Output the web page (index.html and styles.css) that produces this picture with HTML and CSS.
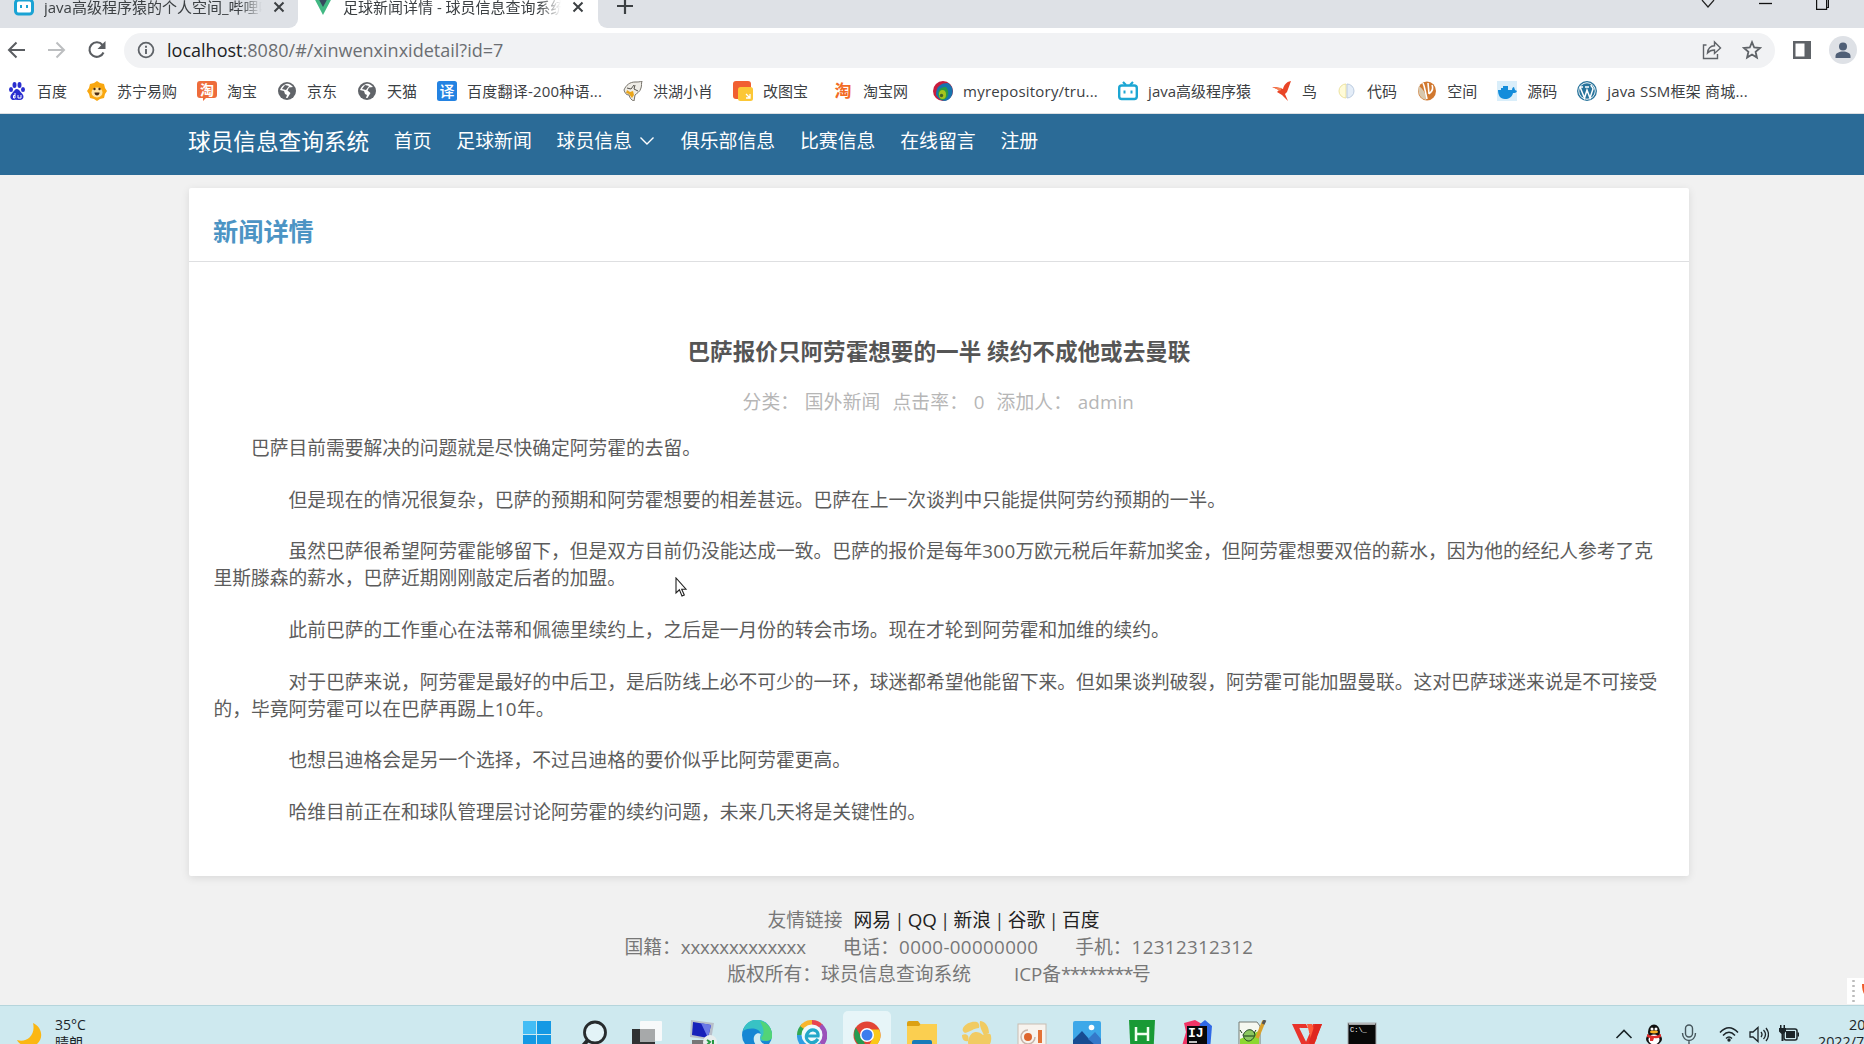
FILE: index.html
```html
<!DOCTYPE html>
<html lang="zh-CN">
<head>
    <meta charset="UTF-8">
    <title>足球新闻详情 - 球员信息查询系统</title>
    <link rel="stylesheet" href="styles.css">
</head>
<body>

    <!-- Tabs -->
    <div class="tabs">
        <div class="tab">
            <svg class="tab-icon" width="20" height="20" viewBox="0 0 20 20"><rect x="1.5" y="4" width="17" height="14" rx="3" fill="#fff" stroke="#1aa3d4" stroke-width="3"/><path d="M7 9v3M13 9v3" stroke="#1aa3d4" stroke-width="2"/></svg>
            <span class="tab-title">java高级程序猿的个人空间_哔哩哔哩</span>
            <svg class="close" width="12" height="12" viewBox="0 0 12 12"><path d="M1.5 1.5l9 9m0-9l-9 9" stroke="#3c4043" stroke-width="2"/></svg>
        </div>
        <div class="tab active">
            <svg class="tab-icon" width="20" height="20" viewBox="0 0 20 20"><path d="M0 0h20L10 19z" fill="#41b883"/><path d="M4 0h12l-6 11z" fill="#35495e"/></svg>
            <span class="tab-title">足球新闻详情 - 球员信息查询系统</span>
            <svg class="close" width="12" height="12" viewBox="0 0 12 12"><path d="M1.5 1.5l9 9m0-9l-9 9" stroke="#3c4043" stroke-width="2"/></svg>
        </div>
        <div class="tab-rest">
            <svg width="16" height="16" viewBox="0 0 16 16"><path d="M8 0v16M0 8h16" stroke="#3c4043" stroke-width="2.2"/></svg>
            <div class="window-buttons">
                <svg width="14" height="10" viewBox="0 0 14 10"><path d="M1 0l6 7 6-7" fill="none" stroke="#222" stroke-width="1.2"/></svg>
                <svg width="13" height="10" viewBox="0 0 13 10"><path d="M0 3.5h13" stroke="#111" stroke-width="1.3"/></svg>
                <svg width="13" height="10" viewBox="0 0 13 10"><path d="M.6 0v9.3h10V0M12.4 0v7.5h-2" fill="none" stroke="#111" stroke-width="1.2"/></svg>
            </div>
        </div>
    </div>

    <!-- Address bar -->
    <div class="toolbar">
        <svg width="20" height="20" viewBox="0 0 20 20"><path d="M18 10H2.500M9.500 2.500L2 10l7.500 7.500" fill="none" stroke="#5a5d61" stroke-width="2"/></svg>
        <svg width="20" height="20" viewBox="0 0 20 20"><path d="M1 10h15.500M9.500 2.500L17 10l-7.500 7.500" fill="none" stroke="#bcbec0" stroke-width="2"/></svg>
        <svg width="20" height="20" viewBox="0 0 20 20"><path d="M16.500 12.500A7.300 7.300 0 1 1 15.500 5" fill="none" stroke="#5a5d61" stroke-width="2.100"/><path d="M18.500 1v8h-8z" fill="#5a5d61"/></svg>
        <div class="address">
            <svg width="18" height="18" viewBox="0 0 18 18"><circle cx="9" cy="9" r="7.400" fill="none" stroke="#5f6368" stroke-width="1.800"/><path d="M9 8v5M9 4.700v2" stroke="#5f6368" stroke-width="1.900"/></svg>
            <span class="url"><b>localhost</b>:8080/#/xinwenxinxidetail?id=7</span>
            <svg class="share" width="20" height="20" viewBox="0 0 20 20"><path d="M4.500 5H1.500v13.500h14V14M5.500 13c.5-5 3-7 7-7.200V2l6 6-6 5.500V10c-3 0-5 .8-7 3z" fill="none" stroke="#5f6368" stroke-width="1.400"/></svg>
            <svg width="20" height="20" viewBox="0 0 20 20"><path d="M10 2.200l2.200 5.300 5.800.5-4.400 3.800 1.300 5.700-4.900-3-4.900 3 1.300-5.700L2 8l5.800-.5z" fill="none" stroke="#5f6368" stroke-width="1.800"/></svg>
        </div>
        <svg class="panel" width="18" height="18" viewBox="0 0 18 18"><path fill-rule="evenodd" d="M0 0h18v18H0zM2.500 2.500v13h9v-13z" fill="#5f6368"/></svg>
        <svg width="28" height="28" viewBox="0 0 28 28"><circle cx="14" cy="14" r="14" fill="#dee1e6"/><circle cx="14" cy="10.500" r="4" fill="#4f5f76"/><path d="M6.500 22v-2c0-6 15-6 15 0v2z" fill="#4f5f76"/></svg>
    </div>

    <!-- Bookmarks -->
    <div class="bookmarks">
        <a><svg width="20" height="20" viewBox="0 0 20 20"><g fill="#2b2fd0"><ellipse cx="4" cy="8.500" rx="2" ry="2.600"/><ellipse cx="7.500" cy="4" rx="2" ry="2.900"/><ellipse cx="12.500" cy="4" rx="2" ry="2.900"/><ellipse cx="16" cy="8.500" rx="2" ry="2.600"/><path d="M10 8c2 0 3 2.500 5 4.500 3 3 1 6.500-2 6.500-2 0-4-.6-6 0-3 .5-5-3-2.500-6S8 8 10 8z"/></g><path d="M8 12v5H6.500v-2.500H8M11 14v3h3v-3" fill="none" stroke="#fff"/></svg><span>百度</span></a>
        <a><svg width="20" height="20" viewBox="0 0 20 20"><path d="M10 0l3 2 4 1 1 4 2 3-2 3-1 4-4 1-3 2-3-2-4-1-1-4-2-3 2-3 1-4 4-1z" fill="#f9a70f"/><ellipse cx="10" cy="11.500" rx="5.500" ry="5" fill="#ffe5a6"/><circle cx="7.500" cy="8" r="1.200" fill="#4a2c14"/><circle cx="12.500" cy="8" r="1.200" fill="#4a2c14"/><path d="M7.500 11.500h5c0 4-5 4-5 0z" fill="#4a2c14"/></svg><span>苏宁易购</span></a>
        <a><svg width="20" height="20" viewBox="0 0 20 20"><path d="M3 0h14a3 3 0 0 1 3 3v11a3 3 0 0 1-3 3H9l-3 3v-3H3a3 3 0 0 1-3-3V3a3 3 0 0 1 3-3z" fill="#ee6c3b"/><text x="3" y="14" font-size="14" font-weight="700" fill="#fff">淘</text></svg><span>淘宝</span></a>
        <a><svg width="20" height="20" viewBox="0 0 20 20"><circle cx="10" cy="10" r="9" fill="#616469"/><path d="M9 3c3-1 5 1 7 3l-4 .5-1.500 3 3 2.500-3 5H9l1-3-2-1-1-3-4-1c1-3 3-5 6-6z" fill="#fff"/><path d="M8 4l4 1-3 4-4-1z" fill="#616469"/></svg><span>京东</span></a>
        <a><svg width="20" height="20" viewBox="0 0 20 20"><circle cx="10" cy="10" r="9" fill="#616469"/><path d="M9 3c3-1 5 1 7 3l-4 .5-1.500 3 3 2.500-3 5H9l1-3-2-1-1-3-4-1c1-3 3-5 6-6z" fill="#fff"/><path d="M8 4l4 1-3 4-4-1z" fill="#616469"/></svg><span>天猫</span></a>
        <a class="wide"><svg width="20" height="20" viewBox="0 0 20 20"><rect width="20" height="20" rx="2.500" fill="#2483e2"/><text x="2.500" y="15.500" font-size="15" font-weight="500" fill="#fff">译</text></svg><span>百度翻译-200种语...</span></a>
        <a><svg width="20" height="20" viewBox="0 0 20 20"><path d="M1 9c2-5 6-8 11-8 3 0 5 0 7-1-1 3 0 4-1 7-1 4-4 5-6 7l-1 6c-3-1-4-3-5-6-3 0-4-2-5-5z" fill="#eeece6" stroke="#77736b"/><path d="M4 9l3 2 3-1 1 4-2 3-3-4-3-1z" fill="#e9a51c"/><path d="M4 7l4 1 3-4M12 4l-1 4 4 2" fill="none" stroke="#55524c"/></svg><span>洪湖小肖</span></a>
        <a class="w50"><svg width="20" height="20" viewBox="0 0 20 20"><rect width="18" height="18" rx="3" fill="#f15f31"/><rect x="5" y="6" width="15" height="14" rx="2.500" fill="#fcc735"/><path d="M13 13l4 4m0-4v4h-4" stroke="#fff" stroke-width="1.300" fill="none"/></svg><span>改图宝</span></a>
        <a class="w50"><svg width="20" height="20" viewBox="0 0 20 20"><text x="1.500" y="16" font-size="17" font-weight="700" fill="#f26b24">淘</text></svg><span>淘宝网</span></a>
        <a class="wide repo"><svg width="20" height="20" viewBox="0 0 20 20"><circle cx="10" cy="10" r="10" fill="#c81c3d"/><path d="M3 14C3 5 8 2 15 2c8 5 5 16-3 18-4 0-7-3-9-6z" fill="#1674ae"/><path d="M5 14c0-6 3-8 8-8 5 6 1 14-5 13z" fill="#2b9b43"/><ellipse cx="9.500" cy="13.500" rx="3.500" ry="4.500" fill="#a5c51d"/><circle cx="8.500" cy="14.500" r="1.700" fill="#446428"/></svg><span>myrepository/tru...</span></a>
        <a class="java"><svg width="20" height="20" viewBox="0 0 20 20"><path d="M5 1l3 3M15 1l-3 3" stroke="#1ca6d3" stroke-width="2.200"/><rect x="1.200" y="4.500" width="17.600" height="13.500" rx="2.500" fill="#fff" stroke="#1ca6d3" stroke-width="2.400"/><path d="M6.500 9.500v3M13.500 9.500v3" stroke="#1ca6d3" stroke-width="2"/></svg><span>java高级程序猿</span></a>
        <a><svg width="20" height="20" viewBox="0 0 20 20"><path d="M0 6h4l7 2c1-4 3-7 8-8l-4 11-2 2 3 7-6-6-5-3 2-2z" fill="#e94527"/><path d="M10 7l-2 3-7-4z" fill="#f58254"/></svg><span>鸟</span></a>
        <a><svg width="20" height="20" viewBox="0 0 20 20"><path d="M9 3a7 7 0 0 0 0 14z" fill="#fffbd8" stroke="#ece2a0"/><path d="M10 3a7 7 0 0 1 0 14z" fill="#e4edf8" stroke="#bccce0"/></svg><span>代码</span></a>
        <a><svg width="20" height="20" viewBox="0 0 20 20"><ellipse cx="10" cy="10" rx="9" ry="9.500" fill="#d1782f"/><path d="M2 5c4 3 7 7 7 14C3 18 0 11 2 5z" fill="#d8c7ad"/><path d="M6 2c2 4 2 8 4 16M11 2l1 11M12 13c5-4 4-7 3-9" stroke="#fff" stroke-width="1.600" fill="none"/></svg><span>空间</span></a>
        <a><svg width="20" height="20" viewBox="0 0 20 20"><rect width="20" height="20" fill="#d9eefa"/><path d="M1 9h3V7h2V5h5v4h4c0-2 1-3 2-3l1 3 2 1c-1 2-2 2-4 2-1 4-4 6-8 6-5 0-7-4-7-9z" fill="#148ddb"/></svg><span>源码</span></a>
        <a class="wide ssm"><svg width="20" height="20" viewBox="0 0 20 20"><circle cx="10" cy="10" r="9.300" fill="#fff" stroke="#28749c" stroke-width="1.300"/><circle cx="10" cy="10" r="7.800" fill="#28749c"/><path d="M3 6l4.500 11L10 9l3 8 3-9c0-2-2-2-2-4M2.500 6H6M8 6h4" fill="none" stroke="#fff" stroke-width="1.500"/></svg><span>java SSM框架 商城...</span></a>
    </div>

    <!-- Site navbar -->
    <div class="navbar">
        <a class="brand">球员信息查询系统</a>
        <a>首页</a>
        <a>足球新闻</a>
        <a class="dropdown">球员信息 <svg width="16" height="10" viewBox="0 0 16 10"><path d="M1.500 1.500L8 8l6.500-6.500" fill="none" stroke="#fff" stroke-width="1.400"/></svg></a>
        <a>俱乐部信息</a>
        <a>比赛信息</a>
        <a>在线留言</a>
        <a>注册</a>
    </div>

    <div class="content">
        <div class="card">
            <h2>新闻详情</h2>
            <div class="article">
                <h3>巴萨报价只阿劳霍想要的一半 续约不成他或去曼联</h3>
                <div class="meta">
                    <span>分类： 国外新闻</span>
                    <span>点击率： 0</span>
                    <span>添加人： admin</span>
                </div>
                <p class="first">巴萨目前需要解决的问题就是尽快确定阿劳霍的去留。</p>
                <p>但是现在的情况很复杂，巴萨的预期和阿劳霍想要的相差甚远。巴萨在上一次谈判中只能提供阿劳约预期的一半。</p>
                <p>虽然巴萨很希望阿劳霍能够留下，但是双方目前仍没能达成一致。巴萨的报价是每年<span class="num">300</span>万欧元税后年薪加奖金，但阿劳霍想要双倍的薪水，因为他的经纪人参考了克<br>里斯滕森的薪水，巴萨近期刚刚敲定后者的加盟。</p>
                <p>此前巴萨的工作重心在法蒂和佩德里续约上，之后是一月份的转会市场。现在才轮到阿劳霍和加维的续约。</p>
                <p>对于巴萨来说，阿劳霍是最好的中后卫，是后防线上必不可少的一环，球迷都希望他能留下来。但如果谈判破裂，阿劳霍可能加盟曼联。这对巴萨球迷来说是不可接受<br>的，毕竟阿劳霍可以在巴萨再踢上<span class="num">10</span>年。</p>
                <p>也想吕迪格会是另一个选择，不过吕迪格的要价似乎比阿劳霍更高。</p>
                <p>哈维目前正在和球队管理层讨论阿劳霍的续约问题，未来几天将是关键性的。</p>
            </div>
        </div>

        <footer>
            <div class="links"><span>友情链接</span><a>网易</a> | <a>QQ</a> | <a>新浪</a> | <a>谷歌</a> | <a>百度</a></div>
            <div class="contact"><span>国籍：<span class="country">xxxxxxxxxxxxx</span></span><span>电话：<span class="num">0000-00000000</span></span><span>手机：<span class="num">12312312312</span></span></div>
            <div class="copyright"><span>版权所有：球员信息查询系统</span><span>ICP备<span class="stars">********</span>号</span></div>
        </footer>
    </div>

    <!-- Floating input method bar and mouse pointer -->
    <div class="ime"><svg width="17" height="26" viewBox="0 0 17 26"><path d="M6.500 2v24" stroke="#bbb" stroke-width="2.500" stroke-dasharray="2 3"/><path d="M15 6h2v10c-1-2-2-5-2-10z" fill="#f05a28"/></svg></div>
    <svg class="pointer" width="13" height="21" viewBox="0 0 13 21"><path d="M1 1v15l3.400-3.200L7 19l2.300-1-2.600-5.800H11z" fill="#fff" stroke="#222" stroke-width="1.100"/></svg>

    <!-- Taskbar -->
    <div class="taskbar">
        <div class="weather">
            <svg width="27" height="27" viewBox="0 0 27 27"><path d="M17 0c9 4 11 15 4 21-7 5-17 2-20-4 9 3 19-4 16-17z" fill="#fbb713"/></svg>
            <div>35°C<br>晴朗</div>
        </div>
        <div class="apps">
            <div><svg width="30" height="30" viewBox="0 0 30 30"><path d="M1 1h13v13H1zM15 1h14v13H15zM1 15h13v14H1zM15 15h14v14H15z" fill="#1499e4"/><path d="M1 1h13v13H1z" fill="#43bdf5"/></svg></div>
            <div><svg width="30" height="30" viewBox="0 0 30 30"><circle cx="18" cy="12.500" r="10.500" fill="#e3f3f7" stroke="#272b2d" stroke-width="2.800"/><path d="M11 20l-7 8" stroke="#272b2d" stroke-width="4"/></svg></div>
            <div><svg width="30" height="30" viewBox="0 0 30 30"><rect x="8" y="1" width="22" height="20" rx="1" fill="#f7f9fa"/><path d="M0 9h23v21H0z" fill="#303233"/><path d="M8 9h15v13H8z" fill="#a7a9aa"/></svg></div>
            <div><svg width="30" height="30" viewBox="0 0 30 30"><path d="M4 0l23 3-3 17-21-3z" fill="#b8bfc9"/><path d="M6 2l18 3-3 13-16-3z" fill="#1720ba"/><path d="M14 3l10 2-3 13z" fill="#6b79e6"/><path d="M5 20h12v5H5z" fill="#777"/><circle cx="23" cy="22" r="7" fill="#e8eeee"/><path d="M20 20l3 2-3 3m6-5v5" stroke="#279942" stroke-width="2" fill="none"/></svg></div>
            <div><svg width="30" height="30" viewBox="0 0 30 30"><circle cx="15" cy="15" r="15" fill="#1687d4"/><path d="M1 11C4-2 20-4 27 6c5 8 2 14-5 15-6 0-5-5-3-7-2-6-11-7-18-3z" fill="#38c2c4"/><path d="M18 1c9 2 13 9 12 17-2 4-9 4-11 0 4-4 3-9-1-17z" fill="#52d477"/><path d="M19 14c-6-3-10 5-5 11 5 3 10 2 13 0-7 0-11-5-8-11z" fill="#d2edf3"/></svg></div>
            <div><svg width="30" height="30" viewBox="0 0 30 30"><path d="M15 15L0 15A15 15 0 0 1 5 4z" fill="#32a852"/><path d="M15 15L3 6A15 15 0 0 1 16 0z" fill="#f9b52c"/><path d="M15 15V0a15 15 0 0 1 11 5z" fill="#e8444d"/><path d="M15 15L25 4a15 15 0 0 1 1 22z" fill="#9b51ba"/><path d="M0 15h15l11 11A15 15 0 0 1 0 15z" fill="#2f9ee4"/><circle cx="15" cy="15" r="10.500" fill="#eefafc"/><path d="M21 19c-6 8-14 1-11-5 4-7 12-4 11 2H10" fill="none" stroke="#23a8c9" stroke-width="3.200"/></svg></div>
            <div class="current"><svg width="28" height="28" viewBox="0 0 30 30"><circle cx="15" cy="15" r="14.500" fill="#e24435"/><path d="M3 7l7 12 5 10A15 15 0 0 1 3 7z" fill="#249b51"/><path d="M15 9h13a14.500 14.500 0 0 1-13 21l6-11z" fill="#fbc817"/><circle cx="15" cy="15" r="7.500" fill="#fff"/><circle cx="15" cy="15" r="5.900" fill="#3b7ded"/></svg></div>
            <div><svg width="30" height="30" viewBox="0 0 30 30"><path d="M0 3a2 2 0 0 1 2-2h9l3 4v6H0z" fill="#dca112"/><path d="M0 6h12l2-2h16v26H0z" fill="#fbcf50"/><rect x="5" y="20" width="20" height="10" rx="2" fill="#187bb9"/></svg></div>
            <div><svg width="30" height="30" viewBox="0 0 30 30"><path d="M1 8c3-5 9-7 14-6 2 1 3 4 2 6C12 8 8 12 3 13 1 12 0 10 1 8zM18 1c5 0 9 5 9 12l-5 2c-2-4-5-9-4-14z" fill="#f1cb62"/><path d="M7 18c2-7 9-8 14-3 3-2 8-2 8 1 1 5-1 14-12 15C8 31 4 24 7 18z" fill="#f1cb62"/><path d="M0 15c4-2 8 0 6 6-4 1-6-2-6-6z" fill="#f1cb62"/></svg></div>
            <div><svg width="30" height="30" viewBox="0 0 30 30"><rect x="1" y="4" width="28" height="26" fill="#f7f3ee" stroke="#c9bdb1"/><circle cx="11" cy="17" r="4" fill="#de652d"/><path d="M11 10a7 7 0 1 0 7 7" fill="none" stroke="#c9b5aa" stroke-width="1.500"/><path d="M21 10h4v13h-4z" fill="#e37236"/></svg></div>
            <div><svg width="30" height="30" viewBox="0 0 30 30"><rect x="1" y="1" width="28" height="29" rx="2" fill="#3da8e9"/><path d="M1 20l9-9 7 8 6-6 6 7v10H1z" fill="#174c92"/><path d="M16 19l7-7 6 7v11z" fill="#3479ca"/><circle cx="19.500" cy="7.500" r="2.800" fill="#fff"/></svg></div>
            <div><svg width="30" height="30" viewBox="0 0 30 30"><path d="M2 0h26l-1.500 30h-23z" fill="#199a35"/><path d="M9 7v14M21 7v14M9 14h12" stroke="#f2fff2" stroke-width="2.500"/></svg></div>
            <div><svg width="30" height="30" viewBox="0 0 30 30"><path d="M2 3L13 0l7 4v22H0l4-14z" fill="#f03465"/><path d="M18 4l5-4 7 6-2 24H12z" fill="#3069e6"/><path d="M5 6h20v24H5z" fill="#08080a"/><text x="6" y="17" class="ij">IJ</text><path d="M7 22h8" stroke="#fff" stroke-width="1.500"/></svg></div>
            <div><svg width="30" height="30" viewBox="0 0 30 30"><path d="M2 2h18l3 4v24H2z" fill="#f5f8f0" stroke="#757b73"/><path d="M3 19l19-8v19H3z" fill="#8dd831"/><path d="M6 15c4-8 11-6 12 0-3 8-10 8-12 0zm-1-2l-2-3m14 3l2-3M7 16h10" fill="#8bc760" stroke="#173a19"/><path d="M27 1l-7 17" stroke="#d9a12c" stroke-width="3.500"/><path d="M28 0l-2 4" stroke="#555" stroke-width="3"/></svg></div>
            <div><svg width="30" height="30" viewBox="0 0 30 30"><path d="M0 4h14l2 4H8l6 12 7-16h9L19 30h-7z" fill="#e9332b"/><path d="M15 4h5l5 14-4 9z" fill="#ff5a39"/><path d="M17 22l6-18h7l-10 26z" fill="#df281e"/><path d="M8 8l6 12 3-7" stroke="#cde9ef" stroke-width="1.500" fill="none"/></svg></div>
            <div><svg width="30" height="30" viewBox="0 0 30 30"><rect x="1" y="3" width="28" height="30" fill="#080808" stroke="#a8abad"/><path d="M2 4h26" stroke="#d5d7d8" stroke-width="1.500"/><text x="3" y="12" class="cmd">C:\_</text></svg></div>
        </div>
        <div class="tray">
            <svg width="18" height="20" viewBox="0 0 18 20"><path d="M1.500 14L9 6.500l7.500 7.500" fill="none" stroke="#1b2428" stroke-width="1.600"/></svg>
            <svg width="18" height="20" viewBox="0 0 18 20"><ellipse cx="9" cy="8" rx="6" ry="7.500" fill="#111"/><ellipse cx="9" cy="15" rx="8" ry="6" fill="#111"/><ellipse cx="9" cy="15.500" rx="5.500" ry="5" fill="#fff"/><circle cx="7" cy="5" r="1.500" fill="#fff"/><circle cx="11" cy="5" r="1.500" fill="#fff"/><ellipse cx="9" cy="8" rx="4" ry="1.400" fill="#f9b122"/><path d="M2 10q7 4 14 0v3q-4 2-7 1l-1 3H5v-3l-3-1z" fill="#dd2d2c"/></svg>
            <svg width="16" height="20" viewBox="0 0 16 20"><rect x="4.500" y="1" width="7" height="12" rx="3.500" fill="none" stroke="#46565c" stroke-width="1.400"/><path d="M1.500 9c0 10 13 10 13 0M8 16.500V20" fill="none" stroke="#46565c" stroke-width="1.400"/></svg>
            <svg width="20" height="20" viewBox="0 0 20 20"><path d="M1 8.500Q10-1 19 8.500M4 11.500Q10 5 16 11.500M7 14.500q3-3 6 0" fill="none" stroke="#1b2428" stroke-width="1.500"/><circle cx="10" cy="16" r="1.700" fill="#1b2428"/></svg>
            <svg width="20" height="20" viewBox="0 0 20 20"><path d="M1 8h3l5-4.500v14L4 13H1zM12 8q2 2.500 0 5M14.500 6q4 4.500 0 9M17 4q5 6.500 0 13" fill="none" stroke="#1b2428" stroke-width="1.300"/></svg>
            <svg width="20" height="20" viewBox="0 0 20 20"><rect x="5" y="5" width="13" height="11" rx="2" fill="none" stroke="#1b2428" stroke-width="1.500"/><path d="M7 7h9v7H7zM18.500 8.500H20v4h-1.500zM0 4h7v3.500L4.500 10v7h-2v-7L0 7.500zM1 1h1.500v4H1zM4.500 1H6v4H4.500z" fill="#1b2428"/></svg>
            <div class="clock"><span>20:11</span><span>2022/7/13</span></div>
        </div>
    </div>

</body>
</html>
```
FILE: styles.css
```css
* {
    box-sizing: border-box;
}

body {
    margin: 0;
    width: 1864px;
    height: 1044px;
    overflow: hidden;
    display: flex;
    flex-direction: column;
    background-color: #f1f1f1;
    color: #606266;
    font-family: "Open Sans", "Noto Sans CJK SC", sans-serif;
    font-size: 18.75px;
    text-spacing-trim: space-all;
}

svg {
    display: block;
    flex: none;
}

/* browser tabs */
.tabs {
    display: flex;
    height: 28px;
    flex: none;
    background-color: #fff;
    font-size: 15px;
    color: #3c4043;
}

.tab {
    display: flex;
    width: 298px;
    padding-left: 14px;
    background-color: #dee1e6;
    border-bottom-right-radius: 9px;
}

.tab.active {
    width: 300px;
    padding-left: 15px;
    background-color: #fff;
}

.tab-icon {
    margin-top: -4px;
}

.tab-title {
    width: 218px;
    margin-left: 10px;
    margin-top: -5px;
    line-height: 24px;
    white-space: nowrap;
    overflow: hidden;
    -webkit-mask-image: linear-gradient(to right, #000 90%, transparent);
}

.close {
    margin-left: 11px;
    margin-top: 1px;
}

.tab-rest {
    flex: 1;
    display: flex;
    justify-content: space-between;
    padding-left: 19px;
    background-color: #dee1e6;
    border-bottom-left-radius: 9px;
}

.tab-rest > svg {
    margin-top: -2px;
}

.window-buttons {
    display: flex;
    gap: 44px;
    padding-right: 35px;
}

/* address bar */
.toolbar {
    display: flex;
    align-items: center;
    gap: 20px;
    height: 45px;
    flex: none;
    padding-left: 7px;
    padding-bottom: 1px;
    background-color: #fff;
}

.address {
    display: flex;
    align-items: center;
    width: 1651px;
    height: 35px;
    margin-left: -3px;
    padding-left: 13px;
    border-radius: 18px;
    background-color: #f1f2f4;
}

.url {
    margin-left: 12px;
    font-size: 18.05px;
    line-height: 30px;
    color: #6b6e72;
}

.url b {
    font-weight: 400;
    color: #202124;
}

.share {
    margin-left: auto;
    margin-right: 20px;
}

.address svg:last-child {
    margin-right: 13px;
}

.panel {
    margin-left: -2px;
    margin-right: -2px;
}

/* bookmarks */
.bookmarks {
    display: flex;
    gap: 20px;
    height: 41px;
    flex: none;
    padding: 8px 0 0 7px;
    background-color: #fff;
    border-bottom: 1px solid #dcdfe2;
    font-size: 15px;
    line-height: 20px;
    color: #3c4043;
    white-space: nowrap;
}

.bookmarks a {
    display: flex;
    gap: 10px;
}

.bookmarks a svg {
    font-family: "Noto Sans CJK SC", sans-serif;
}

.wide span {
    width: 136px;
    letter-spacing: 0.2px;
}

.w50 span {
    width: 50px;
}

.wide.repo span {
    width: 135px;
}

.wide.ssm span {
    width: 150px;
}

.java span {
    width: 104px;
}

/* site navbar */
.navbar {
    display: flex;
    gap: 24.7px;
    height: 61px;
    flex: none;
    padding-left: 188px;
    background-color: #2b6b97;
    color: #fff;
    font-size: 18.9px;
    line-height: 54px;
}

.navbar a {
    display: flex;
    align-items: center;
    gap: 7px;
    height: 54px;
}

.navbar .brand {
    height: 56px;
    font-size: 22.65px;
}

.navbar .dropdown {
    margin-right: 1px;
}

.content {
    flex: 1;
    width: 1500px;
    margin-left: 189px;
    padding-top: 13px;
}

.card {
    height: 688px;
    background-color: #fff;
    border-radius: 2px;
    box-shadow: 0 2px 8px rgba(0, 0, 0, 0.1);
}

.card h2 {
    height: 74px;
    margin: 0;
    padding: 24px 24px 0;
    border-bottom: 1px solid #dedfe1;
    font-size: 25.2px;
    line-height: 38px;
    color: #4c94c4;
}

.article {
    padding: 74px 0 0 24.5px;
    color: #5c5c5c;
    line-height: 27px;
    white-space: nowrap;
}

.article h3 {
    margin: 0 24.5px 0 0;
    font-size: 22.6px;
    line-height: 32px;
    text-align: center;
    color: #555;
}

.meta {
    display: flex;
    justify-content: center;
    gap: 12px;
    margin: 20px 26px 19px 0;
    color: #b6b6b6;
    letter-spacing: 0.15px;
    word-spacing: 0.6px;
    white-space: pre;
}

.article p {
    margin: 0 0 24.7px;
    text-indent: 75px;
}

.article .first {
    text-indent: 37.5px;
}

.num {
    letter-spacing: 0.35px;
}

footer {
    padding-top: 30px;
    text-align: center;
    line-height: 27px;
    color: #777;
}

.links {
    color: #333;
    margin-right: 11px;
    word-spacing: -1.7px;
}

.links span {
    margin-right: 11px;
    color: #777;
}

.links a {
    color: #222;
}

.contact,
.copyright {
    display: flex;
    justify-content: center;
    gap: 37px;
}

.country {
    letter-spacing: -0.2px;
}

.copyright {
    gap: 43px;
}

.stars {
    letter-spacing: -1.45px;
}

/* things on top of the page */
.ime {
    position: absolute;
    right: 0;
    top: 978px;
    background-color: #fff;
}

.pointer {
    position: absolute;
    left: 675px;
    top: 577px;
}

/* taskbar */
.taskbar {
    display: flex;
    height: 39px;
    flex: none;
    overflow: hidden;
    border-top: 1px solid #b5d5dc;
    background-color: #cee9ef;
    color: #1b2428;
}

.weather {
    display: flex;
    gap: 12px;
    width: 509px;
    padding: 10px 0 0 16px;
    font-size: 14px;
    line-height: 18px;
}

.weather svg {
    margin-top: 7px;
}

.apps {
    display: grid;
    grid-template-columns: repeat(16, 55px);
}

.apps div {
    display: flex;
    justify-content: center;
    padding-top: 14px;
}

.apps .current {
    margin: 5px 3px 0 4px;
    padding-top: 10px;
    border-radius: 5px;
    background-color: #e7f5f8;
}

.ij {
    font-family: "Liberation Mono", monospace;
    font-size: 13px;
    font-weight: 700;
    fill: #fff;
}

.cmd {
    font-family: "Liberation Mono", monospace;
    font-size: 7px;
    fill: #fff;
}

.tray {
    display: flex;
    width: 249px;
    margin-left: auto;
    padding-top: 18px;
}

.tray svg:nth-child(2) {
    margin-left: 12px;
}

.tray svg:nth-child(3) {
    margin-left: 18px;
}

.tray svg:nth-child(4) {
    margin-left: 22px;
}

.tray svg:nth-child(5),
.tray svg:nth-child(6) {
    margin-left: 10px;
}

.clock {
    display: flex;
    flex-direction: column;
    margin-left: 19px;
    margin-top: -8px;
    font-size: 14.3px;
    line-height: 17px;
}

.clock span:first-child {
    margin-left: 31px;
}
```
